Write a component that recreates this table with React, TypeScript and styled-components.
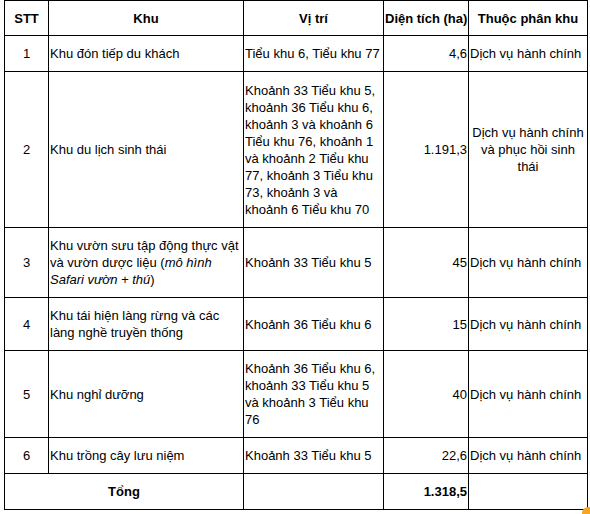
import styled, { createGlobalStyle } from "styled-components";

const GlobalStyle = createGlobalStyle`
html, body {
    margin: 0;
    padding: 0;
    background: #ffffff;
}
body {
    font-family: "Liberation Sans", Arial, sans-serif;
    color: #000;
}
`

type Row = {
    stt: string;
    khu: React.ReactNode;
    viTri: string;
    dienTich: string;
    phanKhu: React.ReactNode;
    h: number;
}

const rows: Row[] = [
    { stt: "1", khu: "Khu đón tiếp du khách", viTri: "Tiểu khu 6, Tiểu khu 77", dienTich: "4,6", phanKhu: "Dịch vụ hành chính", h: 36 },
    {
        stt: "2",
        khu: "Khu du lịch sinh thái",
        viTri: "Khoảnh 33 Tiểu khu 5, khoảnh 36 Tiểu khu 6, khoảnh 3 và khoảnh 6 Tiểu khu 76, khoảnh 1 và khoảnh 2 Tiểu khu 77, khoảnh 3 Tiểu khu 73, khoảnh 3 và khoảnh 6 Tiểu khu 70",
        dienTich: "1.191,3",
        phanKhu: <>Dịch vụ hành chính và phục hồi sinh thái</>,
        h: 156,
    },
    {
        stt: "3",
        khu: <>Khu vườn sưu tập động thực vật và vườn dược liệu (<i>mô hình Safari vườn + thú</i>)</>,
        viTri: "Khoảnh 33 Tiểu khu 5",
        dienTich: "45",
        phanKhu: "Dịch vụ hành chính",
        h: 70,
    },
    { stt: "4", khu: "Khu tái hiện làng rừng và các làng nghề truyền thống", viTri: "Khoảnh 36 Tiểu khu 6", dienTich: "15", phanKhu: "Dịch vụ hành chính", h: 53 },
    { stt: "5", khu: "Khu nghỉ dưỡng", viTri: "Khoảnh 36 Tiểu khu 6, khoảnh 33 Tiểu khu 5 và khoảnh 3 Tiểu khu 76", dienTich: "40", phanKhu: "Dịch vụ hành chính", h: 87 },
    { stt: "6", khu: "Khu trồng cây lưu niệm", viTri: "Khoảnh 33 Tiểu khu 5", dienTich: "22,6", phanKhu: "Dịch vụ hành chính", h: 36 },
]

function App() {
    return (
        <>
            <GlobalStyle />
            <Page>
                <Table>
                    <colgroup>
                        <col style={{ width: 44 }} />
                        <col style={{ width: 195 }} />
                        <col style={{ width: 140 }} />
                        <col style={{ width: 85 }} />
                        <col style={{ width: 119 }} />
                    </colgroup>
                    <thead>
                        <Tr $h={35}>
                            <Th>STT</Th>
                            <Th>Khu</Th>
                            <Th>Vị trí</Th>
                            <Th>Diện tích (ha)</Th>
                            <Th>Thuộc phân khu</Th>
                        </Tr>
                    </thead>
                    <tbody>
                        {rows.map((r) => (
                            <Tr key={r.stt} $h={r.h}>
                                <Td $align="center">{r.stt}</Td>
                                <Td>{r.khu}</Td>
                                <Td>{r.viTri}</Td>
                                <Td $align="right">{r.dienTich}</Td>
                                <Td $align={r.stt === "2" ? "center" : "left"}>{r.phanKhu}</Td>
                            </Tr>
                        ))}
                        <Tr $h={36}>
                            <Td colSpan={2} $align="center" $bold>Tổng</Td>
                            <Td></Td>
                            <Td $align="right" $bold>1.318,5</Td>
                            <Td></Td>
                        </Tr>
                    </tbody>
                </Table>
                <Handle />
            </Page>
        </>
    )
}

const Page = styled.div`
position: relative;
width: 590px;
height: 514px;
overflow: hidden;
padding-left: 4px;
box-sizing: border-box;
`

const Table = styled.table`
border-collapse: collapse;
table-layout: fixed;
width: 584px;
font-size: 13px;
line-height: 17px;
`

const Tr = styled.tr<{ $h: number }>`
height: ${(p) => p.$h}px;
`

const Th = styled.th`
border: 1px solid #000;
padding: 0 1px;
font-weight: bold;
text-align: center;
vertical-align: middle;
white-space: nowrap;
`

const Td = styled.td<{ $align?: "left" | "center" | "right"; $bold?: boolean }>`
border: 1px solid #000;
padding: 0 1px;
text-align: ${(p) => p.$align || "left"};
font-weight: ${(p) => (p.$bold ? "bold" : "normal")};
vertical-align: middle;
i {
    font-style: italic;
}
`

const Handle = styled.div`
position: absolute;
right: -4px;
bottom: -5px;
width: 12px;
height: 12px;
border-radius: 50%;
background: #f5a623;
`

export default App;
